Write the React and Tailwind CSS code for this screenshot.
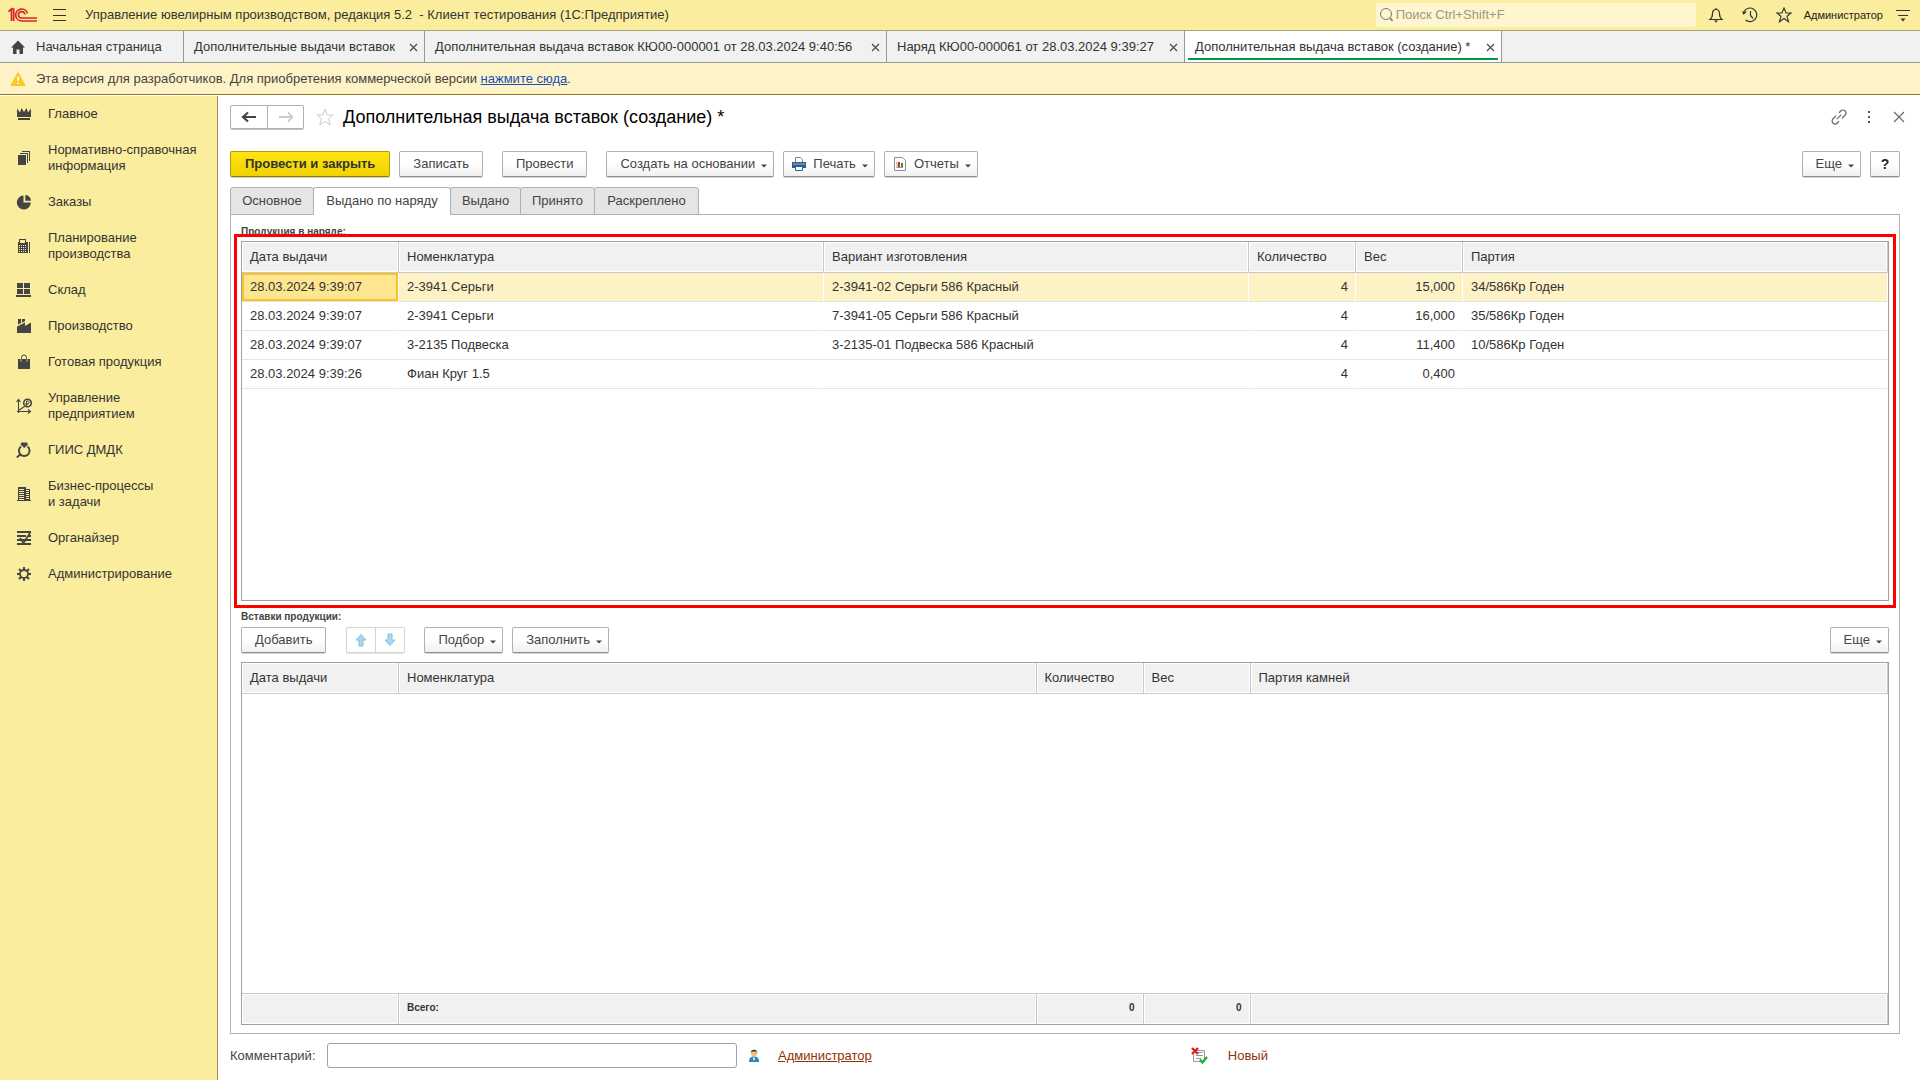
import React from 'react';

const TABS = [
  { title: 'Дополнительные выдачи вставок', width: 'w-[241px]' },
  { title: 'Дополнительная выдача вставок КЮ00-000001 от 28.03.2024 9:40:56', width: 'w-[462px]' },
  { title: 'Наряд КЮ00-000061 от 28.03.2024 9:39:27', width: 'w-[298px]' },
  { title: 'Дополнительная выдача вставок (создание) *', width: 'w-[317px]', active: true },
];

const SECTIONS = [
  { icon: 'crown', label: 'Главное' },
  { icon: 'pages', label: 'Нормативно-справочная информация' },
  { icon: 'pie', label: 'Заказы' },
  { icon: 'calc', label: 'Планирование производства' },
  { icon: 'store', label: 'Склад' },
  { icon: 'factory', label: 'Производство' },
  { icon: 'bag', label: 'Готовая продукция' },
  { icon: 'graph', label: 'Управление предприятием' },
  { icon: 'ring', label: 'ГИИС ДМДК' },
  { icon: 'building', label: 'Бизнес-процессы и\u00a0задачи' },
  { icon: 'organizer', label: 'Органайзер' },
  { icon: 'gear', label: 'Администрирование' },
];

const PAGES = [
  { title: 'Основное', width: 'w-[84px]' },
  { title: 'Выдано по наряду', width: 'w-[138px]', active: true },
  { title: 'Выдано', width: 'w-[71px]' },
  { title: 'Принято', width: 'w-[75px]' },
  { title: 'Раскреплено', width: 'w-[105px]' },
];

const PRODUCTS = [
  ['28.03.2024 9:39:07', '2-3941 Серьги', '2-3941-02 Серьги 586 Красный', '4', '15,000', '34/586Кр Годен'],
  ['28.03.2024 9:39:07', '2-3941 Серьги', '7-3941-05 Серьги 586 Красный', '4', '16,000', '35/586Кр Годен'],
  ['28.03.2024 9:39:07', '3-2135 Подвеска', '3-2135-01 Подвеска 586 Красный', '4', '11,400', '10/586Кр Годен'],
  ['28.03.2024 9:39:26', 'Фиан Круг 1.5', '', '4', '0,400', ''],
];

const NAV_ICONS = {
  crown: (
    <g fill="currentColor">
      <path d="M1 2.500l3 4L5.500 2l2.500 4L10.500 2 12 6.500l3-4V11H1z" />
      <path d="M2 12h12v2H2z" />
    </g>
  ),
  pages: (
    <g fill="currentColor" shapeRendering="crispEdges">
      <path d="M2 5h8v10H2zM4 3h8v10h-1V4H4zM6 1h8v10h-1V2H6z" />
    </g>
  ),
  pie: (
    <g fill="currentColor">
      <path d="M7.5 1.5V8.5H14.8A7 7 0 1 1 7.5 1.5z" />
      <path d="M9.3 1a6.3 6.3 0 0 1 5.7 5.8H9.3z" />
    </g>
  ),
  calc: (
    <g fill="currentColor" shapeRendering="crispEdges">
      <path fillRule="evenodd" d="M3 1h7v3h2v11H2V4h1zM4 2v3h5V2zM3 7v1h1V7zM5 7v1h1V7zM7 7v1h1V7zM9 7v1h1V7zM3 9v1h1V9zM5 9v1h1V9zM7 9v1h1V9zM9 9v1h1V9zM3 11v1h1v-1zM5 11v1h1v-1zM7 11v1h1v-1zM9 11v1h1v-1zM3 13v1h1v-1zM5 13v1h1v-1zM7 13v1h1v-1zM9 13v1h1v-1z" />
      <path d="M13 4h1v11h-1z" />
    </g>
  ),
  store: (
    <path fill="currentColor" shapeRendering="crispEdges" d="M1 1h6v5H1zM8 1h6v5H8zM1 7h6v5H1zM8 7h6v5H8zM0 13h15v2H0z" />
  ),
  factory: (
    <path fill="currentColor" d="M2 1h3v4L2 6.5zM6 1h3v2.2L6 4.8zM1 8.6L9 4.4V8l6-3.4V15H1z" />
  ),
  bag: (
    <g>
      <path fill="currentColor" d="M2 5h12v10H2z" />
      <path fill="none" stroke="currentColor" d="M5.5 6V3.500a2.500 2.500 0 0 1 5 0V6" />
      <path fill="none" stroke="#fbed9e" strokeWidth="0.8" d="M4.900 5v2.500M11.100 5v2.500" />
    </g>
  ),
  graph: (
    <g fill="none" stroke="currentColor" strokeWidth="1.1">
      <path d="M2.500 15V2M0.500 4l2-2.500 2 2.500M1 13.500h13M12 11.500l2.500 2-2.500 2M2.500 12.500l6-4" />
      <circle cx="11.500" cy="5" r="3.800" strokeWidth="1.600" />
      <path d="M10.500 7.500V3h1.500a1.200 1.200 0 0 1 0 2.500H9.500M9.500 6.800H12" strokeWidth="0.900" />
    </g>
  ),
  ring: (
    <g fill="none" stroke="currentColor">
      <path strokeWidth="1.900" d="M5 4.500a5.300 5.300 0 1 0 6.500 0M4.500 12.200L0.800 15.400" />
      <path fill="currentColor" stroke="none" d="M5.500 0.500h5.500l1 2-3.700 3.600L4.500 2.500z" />
    </g>
  ),
  building: (
    <g fill="currentColor" shapeRendering="crispEdges">
      <path fillRule="evenodd" d="M2 1h8v2h4v11h1v1H1v-1h1zM3 3v1h5V3zM3 5v1h5V5zM3 7v1h5V7zM3 9v1h5V9zM3 11v1h5v-1zM3 13v1h5v-1zM10 4v1h3V4zM10 6v1h3V6zM10 8v1h3V8zM10 10v1h3v-1zM10 12v1h3v-1z" />
    </g>
  ),
  organizer: (
    <g>
      <path fill="currentColor" shapeRendering="crispEdges" d="M1 1h14v2H1zM1 5h9v2H1zM12 5h3v2h-3zM1 9h14v2H1zM1 13h14v2H1z" />
      <path d="M4 8l3.500 5L14 3" fill="none" stroke="currentColor" strokeWidth="1.800" />
    </g>
  ),
  gear: (
    <g fill="none" stroke="currentColor">
      <circle cx="8" cy="8" r="4" strokeWidth="1.800" />
      <path strokeWidth="2" d="M8 1v2.500M8 12.500V15M1 8h2.500M12.500 8H15M3 3l1.900 1.900M11.100 11.100L13 13M3 13l1.900-1.900M11.100 4.900L13 3" />
    </g>
  ),
};

function Svg({ w = 16, h = 16, className = '', children }) {
  return (
    <svg width={w} height={h} viewBox={`0 0 ${w} ${h}`} className={`shrink-0 ${className}`} aria-hidden="true">
      {children}
    </svg>
  );
}

function Caret() {
  return (
    <Svg w={6} h={4} className="mt-1"><path d="M0 0.500h6L3 3.500z" fill="#444" /></Svg>
  );
}

function Button({ children, caret, className = '' }) {
  return (
    <button
      type="button"
      className={[
        'h-[26px] flex items-center justify-center rounded-[2px] border border-[#b0b0b0] border-b-[#8f8f8f] shadow-[0_1px_0_#d4d4d4]',
        'bg-linear-to-b from-white from-50% to-[#f0f0f0] text-[#444] whitespace-nowrap',
        caret ? 'gap-[6px] pl-[13px] pr-[6px]' : 'px-[13px]',
        className,
      ].join(' ')}
    >
      {children}
      {caret && <Caret />}
    </button>
  );
}

function TitleBar() {
  return (
    <header className="h-[31px] shrink-0 flex items-center bg-[#fbed9e] border-b border-[#a9a572] text-[#333]">
      <Svg w={30} h={16} className="ml-2">
        <g fill="none" stroke="#d8232a" strokeWidth="1.700">
          <path d="M0.500 4.500L3.500 2v12M3.500 2h2.200v12" />
          <path d="M19.500 6.500A6 6 0 1 0 13.800 14H29" />
          <path d="M16.800 7.500A3.200 3.200 0 1 0 13.800 11H29" />
        </g>
      </Svg>
      <button type="button" aria-label="Меню" className="ml-[13px]">
        <Svg w={16} h={16}><path d="M2 2.500h13M2 8.500h13M2 13.500h13" stroke="#333" shapeRendering="crispEdges" /></Svg>
      </button>
      <h1 className="ml-[18px] whitespace-pre">Управление ювелирным производством, редакция 5.2  - Клиент тестирования (1С:Предприятие)</h1>
      <label className="ml-auto mb-px w-80 h-6 pl-[2px] flex items-center gap-[2px] rounded-[2px] bg-[#fdf6cf]">
        <Svg w={16} h={16}>
          <circle cx="8" cy="7" r="5.500" fill="none" stroke="#777" />
          <path d="M12 11l2.500 3" stroke="#777" strokeWidth="1.600" />
        </Svg>
        <input
          type="text"
          aria-label="Поиск"
          placeholder="Поиск Ctrl+Shift+F"
          className="flex-1 min-w-0 bg-transparent outline-none placeholder:text-[#a09a80]"
        />
      </label>
      <div className="ml-3 flex items-center gap-[18px]">
        <button type="button" aria-label="Уведомления">
          <Svg>
            <path d="M2 12.500c2-1.500 2.500-3 2.500-6C4.500 4 6 2.500 8 2.500s3.500 1.500 3.500 4c0 3 .5 4.500 2.500 6zM8 1v1.500" fill="none" stroke="#333" strokeWidth="1.200" />
            <path d="M6 13.500h4L8 15.800z" fill="#333" />
          </Svg>
        </button>
        <button type="button" aria-label="История">
          <Svg>
            <path d="M2 4.500A6.800 6.800 0 1 1 3.500 13M8.500 4v4.500l2.500 3" fill="none" stroke="#333" strokeWidth="1.200" />
            <path d="M0 4.500h5L1.500 8z" fill="#333" />
          </Svg>
        </button>
        <button type="button" aria-label="Избранное">
          <Svg><path d="M8 1l2 5h5.200L11 9.300l1.600 5.500L8 11.500l-4.600 3.300L5 9.300.8 6H6z" fill="none" stroke="#333" strokeWidth="1.100" /></Svg>
        </button>
      </div>
      <span className="ml-3 text-[11px] text-[#222]">Администратор</span>
      <button type="button" aria-label="Сервис" className="ml-3 mr-[9px]">
        <Svg><path d="M1 3.500h14M3 8.500h10" stroke="#333" shapeRendering="crispEdges" /><path d="M5.500 11.500h5L8 14.500z" fill="#333" /></Svg>
      </button>
    </header>
  );
}

function WindowTabs() {
  return (
    <nav className="h-8 shrink-0 flex bg-[#f1f1f1] border-b border-[#999] text-[#333]">
      <a href="#home" className="w-[184px] pl-[10px] flex items-center gap-[10px] border-r border-[#999]">
        <Svg><path d="M8 1.500L15 8.500h-2V15H9.500v-4.500h-3V15H3V8.500H1z" fill="#444" /></Svg>
        Начальная страница
      </a>
      {TABS.map(t => (
        <div
          key={t.title}
          className={[
            'relative flex items-center justify-between pl-[10px] pr-[6px] border-r border-[#999]',
            t.width,
            t.active ? 'bg-white' : '',
          ].join(' ')}
        >
          <a href="#tab" className="whitespace-nowrap">{t.title}</a>
          <button type="button" aria-label="Закрыть">
            <Svg w={9} h={9} className="mt-px"><path d="M1 1l7 7M8 1L1 8" stroke="#444" strokeWidth="1.100" /></Svg>
          </button>
          {t.active && <span className="absolute left-[3px] right-[3px] bottom-[2px] h-[2px] bg-[#009846]" />}
        </div>
      ))}
    </nav>
  );
}

function Banner() {
  return (
    <div className="h-8 shrink-0 pl-[10px] flex items-center bg-[#fef3c7] border-b border-[#94791a] text-[#444]">
      <Svg className="mr-[10px]">
        <path d="M8 1.500L15 14.500H1z" fill="#fbc81e" stroke="#fbc81e" strokeLinejoin="round" />
        <path d="M8 5.500v4.500M8 11.500v1.500" stroke="#fff" strokeWidth="1.600" />
      </Svg>
      Эта версия для разработчиков. Для приобретения коммерческой версии&nbsp;
      <a href="#buy" className="text-[#1a4fb4] underline">нажмите сюда</a>.
    </div>
  );
}

function Sidebar() {
  return (
    <nav className="w-[218px] shrink-0 mt-px bg-[#fbed9e] border-r border-[#948e60] text-[#333]">
      {SECTIONS.map(s => (
        <a key={s.label} href="#section" className="pl-4 pr-4 py-[10px] flex items-center gap-4 leading-4">
          <Svg className="text-[#444]">{NAV_ICONS[s.icon]}</Svg>
          <span>{s.label}</span>
        </a>
      ))}
    </nav>
  );
}

function FormHeader() {
  return (
    <div className="h-6 flex items-center">
      <button type="button" aria-label="Назад" className="h-6 w-[38px] flex items-center justify-center rounded-l-[2px] border border-[#b0b0b0] shadow-[0_1px_0_#c4c4c4]">
        <Svg><path d="M7 3.500L2 8l5 4.500M2.500 8H15" fill="none" stroke="#444" strokeWidth="2.200" /></Svg>
      </button>
      <button type="button" aria-label="Вперед" className="h-6 w-[37px] -ml-px flex items-center justify-center rounded-r-[2px] border border-[#b0b0b0] shadow-[0_1px_0_#c4c4c4]">
        <Svg><path d="M10 3.500L14.500 8 10 12.500M14 8H1" fill="none" stroke="#ccc" strokeWidth="1.800" /></Svg>
      </button>
      <button type="button" aria-label="В избранное" className="ml-3">
        <Svg w={18} h={18}><path d="M9 1l2.200 6H17l-4.500 3.800L14.200 17 9 13.300 3.800 17l1.700-6.200L1 7h5.800z" fill="none" stroke="#ccc" /></Svg>
      </button>
      <h2 className="ml-[9px] text-lg leading-6 text-black">Дополнительная выдача вставок (создание) *</h2>
      <div className="ml-auto -mr-[7px] flex items-center gap-[14px]">
        <button type="button" aria-label="Ссылка">
          <Svg>
            <g fill="none" stroke="#666" strokeWidth="1.200" transform="rotate(-45 8 8)">
              <path d="M7 5H2.500a3 3 0 0 0 0 6H5M9 11h4.500a3 3 0 0 0 0-6H11M5 8h6" />
            </g>
          </Svg>
        </button>
        <button type="button" aria-label="Действия">
          <Svg><path d="M7 2h2v2H7zM7 7h2v2H7zM7 12h2v2H7z" fill="#555" /></Svg>
        </button>
        <button type="button" aria-label="Закрыть форму">
          <Svg><path d="M3 3l10 10M13 3L3 13" stroke="#666" strokeWidth="1.100" /></Svg>
        </button>
      </div>
    </div>
  );
}

function Toolbar() {
  return (
    <div className="mt-[22px] flex items-center">
      <button
        type="button"
        className="h-[26px] px-[14px] rounded-[2px] border border-[#b09a10] border-b-[#8f7a00] shadow-[0_1px_0_#d4d4d4] bg-linear-to-b from-[#ffe40f] to-[#f2d200] font-bold text-[#333] whitespace-nowrap"
      >
        Провести и закрыть
      </button>
      <Button className="ml-[9px]">Записать</Button>
      <Button className="ml-[19px]">Провести</Button>
      <Button caret className="ml-[19px]">Создать на основании</Button>
      <Button caret className="ml-[9px] pl-[7px]!">
        <Svg>
          <path d="M4.500 6V1.500h5l2 2V6" fill="#fff" stroke="#6b87a3" />
          <path d="M1 6h14v6H1z" fill="#2f5d8c" />
          <path d="M2 8h12" stroke="#9db8d2" />
          <path d="M4.500 10.500h7v4h-7z" fill="#fff" stroke="#2f5d8c" />
        </Svg>
        Печать
      </Button>
      <Button caret className="ml-[9px] pl-[7px]!">
        <Svg>
          <path d="M2.500 1.500h8l3 3v10h-11z" fill="#fff" stroke="#7d93ab" />
          <path d="M5 6v6M5 11.500h6" stroke="#999" />
          <path d="M6 6h2v5H6z" fill="#e02020" />
          <path d="M9 7h2v4H9z" fill="#2a9a2a" />
        </Svg>
        Отчеты
      </Button>
      <Button caret className="ml-auto">Еще</Button>
      <Button className="ml-[9px] w-[30px] px-0! text-sm font-bold text-[#222]!">?</Button>
    </div>
  );
}

function PageTabs() {
  return (
    <div role="tablist" className="mt-[10px] -mb-px flex relative">
      {PAGES.map((p, i) => (
        <button
          key={p.title}
          type="button"
          role="tab"
          aria-selected={!!p.active}
          className={[
            'h-7 border border-[#b0b0b0] rounded-t-[3px] text-[#444] whitespace-nowrap',
            p.width,
            i > 0 ? '-ml-px' : '',
            p.active ? 'bg-white border-b-white' : 'bg-[#e5e5e5]',
          ].join(' ')}
        >
          {p.title}
        </button>
      ))}
    </div>
  );
}

const TH = 'h-[31px] px-2 text-left font-normal truncate bg-[#f1f1f1] border-r border-b border-[#c8c8c8] shadow-[inset_0_0_0_1px_#fff]';
const TF = 'h-[31px] px-2 pb-[2px] text-[10px] font-bold bg-[#f1f1f1] border-t border-r border-[#c8c8c8] shadow-[inset_0_0_0_1px_#fff]';

function ProductsTable() {
  return (
    <div className="relative h-[360px] shrink-0 border border-[#a0a0a0]">
      <table className="w-full table-fixed border-separate border-spacing-0 text-[#333]">
        <colgroup>
          <col className="w-[157px]" />
          <col />
          <col />
          <col className="w-[107px]" />
          <col className="w-[107px]" />
          <col />
        </colgroup>
        <thead>
          <tr>
            {['Дата выдачи', 'Номенклатура', 'Вариант изготовления', 'Количество', 'Вес', 'Партия'].map(h => (
              <th key={h} scope="col" className={TH}>{h}</th>
            ))}
          </tr>
        </thead>
        <tbody>
          {PRODUCTS.map((row, r) => (
            <tr key={r} className={r === 0 ? 'bg-[#fdf1c6]' : ''}>
              {row.map((v, c) => (
                <td
                  key={c}
                  className={[
                    'h-[29px] border-b border-b-[#e5e5e5] border-r truncate',
                    r === 0 ? 'border-r-white' : 'border-r-transparent',
                    r === 0 && c === 0 ? 'bg-[#fde68f] shadow-[inset_0_0_0_2px_#f9c22b]' : '',
                    c === 3 || c === 4 ? 'text-right px-[7px]' : 'px-2',
                  ].join(' ')}
                >
                  {v}
                </td>
              ))}
            </tr>
          ))}
        </tbody>
      </table>
      <div className="absolute -inset-2 border-3 border-[#ff0000] pointer-events-none" />
    </div>
  );
}

function InsertsTable() {
  return (
    <div className="mt-[9px] flex-1 min-h-0 border border-[#a0a0a0]">
      <table className="w-full h-full table-fixed border-separate border-spacing-0 text-[#333]">
        <colgroup>
          <col className="w-[157px]" />
          <col />
          <col className="w-[107px]" />
          <col className="w-[107px]" />
          <col />
        </colgroup>
        <thead>
          <tr>
            {['Дата выдачи', 'Номенклатура', 'Количество', 'Вес', 'Партия камней'].map(h => (
              <th key={h} scope="col" className={TH}>{h}</th>
            ))}
          </tr>
        </thead>
        <tbody>
          <tr><td colSpan={5} /></tr>
        </tbody>
        <tfoot>
          <tr>
            <td className={TF} />
            <td className={TF}>Всего:</td>
            <td className={`${TF} text-right`}>0</td>
            <td className={`${TF} text-right`}>0</td>
            <td className={TF} />
          </tr>
        </tfoot>
      </table>
    </div>
  );
}

function InsertsToolbar() {
  return (
    <div className="mt-[2px] flex items-center">
      <Button>Добавить</Button>
      <button type="button" aria-label="Вверх" className="ml-5 h-[26px] w-[30px] flex items-center justify-center rounded-l-[2px] border border-[#d4d4d4] shadow-[0_1px_0_#e4e4e4]">
        <Svg w={12} h={14}><path d="M6 1.500l5 5.500H8v6H4V7H1z" fill="#a5d8f3" stroke="#8cbcd8" /></Svg>
      </button>
      <button type="button" aria-label="Вниз" className="-ml-px h-[26px] w-[30px] flex items-center justify-center rounded-r-[2px] border border-[#d4d4d4] shadow-[0_1px_0_#e4e4e4]">
        <Svg w={12} h={14}><path d="M6 12.500L1 7h3V1h4v6h3z" fill="#a5d8f3" stroke="#8cbcd8" /></Svg>
      </button>
      <Button caret className="ml-[19px]">Подбор</Button>
      <Button caret className="ml-[9px]">Заполнить</Button>
      <Button caret className="ml-auto">Еще</Button>
    </div>
  );
}

function FormFooter() {
  return (
    <div className="mt-[9px] mb-3 flex items-center text-[#444]">
      <label htmlFor="comment" className="w-[97px]">Комментарий:</label>
      <input id="comment" type="text" className="w-[410px] h-[25px] px-2 rounded-[3px] border border-[#a0a0a0] outline-none" />
      <Svg className="ml-[9px]">
        <path d="M3 14c0-4 1.500-5.500 5-5.500s5 1.500 5 5.500z" fill="#2f86c1" />
        <circle cx="8" cy="5" r="3.200" fill="#f2bf6c" />
        <path d="M4.600 5C4.600 0.500 11.400 0.500 11.400 5L10.500 3.500h-5z" fill="#333" />
        <path d="M8 9l-1 1.500L8 13l1-2.500z" fill="#fff" />
      </Svg>
      <a href="#user" className="ml-4 text-[#8f3206] underline">Администратор</a>
      <div className="ml-[319px] flex items-center gap-5 text-[#8f3206]">
        <Svg w={17} h={17}>
          <path d="M4 3.500h9.500v11H2.500V7" fill="#fff" stroke="#8a9cb0" />
          <path d="M7 5.500h5M5 8.500h7M5 11.500h5" stroke="#8a9cb0" />
          <path d="M1 1l6 6M7 1L1 7" stroke="#dd2222" strokeWidth="2.400" />
          <path d="M9 12.500l2.500 3L16 10" fill="none" stroke="#1fae2f" strokeWidth="2.200" />
        </Svg>
        <span>Новый</span>
      </div>
    </div>
  );
}

export default function App() {
  return (
    <div className="h-screen flex flex-col bg-white text-[13px] leading-4 font-['Liberation_Sans',Arial,sans-serif]">
      <TitleBar />
      <WindowTabs />
      <Banner />
      <div className="flex-1 min-h-0 flex">
        <Sidebar />
        <main className="flex-1 min-w-0 pl-3 pr-5 pt-[10px] flex flex-col">
          <FormHeader />
          <Toolbar />
          <PageTabs />
          <section className="flex-1 min-h-0 px-[10px] pt-[9px] pb-2 flex flex-col border border-[#b0b0b0]">
            <h3 className="h-4 mb-px shrink-0 text-[10px] font-bold text-[#444]">Продукция в наряде:</h3>
            <ProductsTable />
            <h3 className="h-4 mt-2 shrink-0 text-[10px] font-bold text-[#444]">Вставки продукции:</h3>
            <InsertsToolbar />
            <InsertsTable />
          </section>
          <FormFooter />
        </main>
      </div>
    </div>
  );
}
